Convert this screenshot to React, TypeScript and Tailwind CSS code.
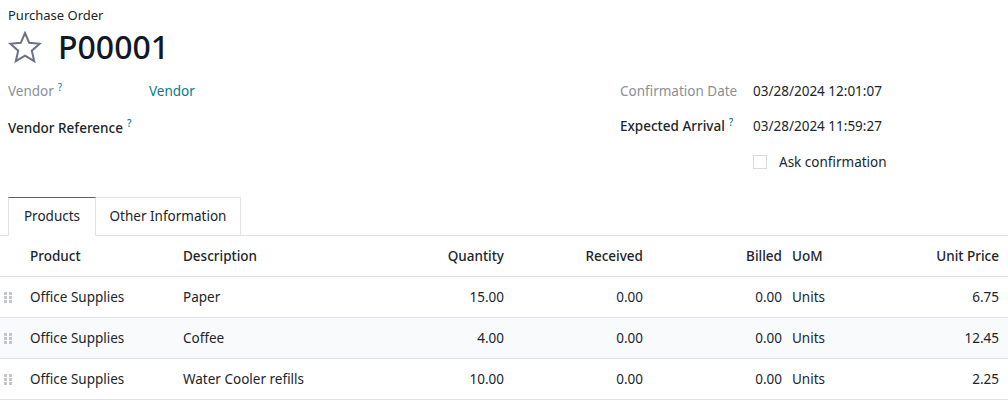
import React from 'react';

const lines = [
  { product: 'Office Supplies', description: 'Paper', qty: '15.00', received: '0.00', billed: '0.00', uom: 'Units', price: '6.75' },
  { product: 'Office Supplies', description: 'Coffee', qty: '4.00', received: '0.00', billed: '0.00', uom: 'Units', price: '12.45' },
  { product: 'Office Supplies', description: 'Water Cooler refills', qty: '10.00', received: '0.00', billed: '0.00', uom: 'Units', price: '2.25' },
];

const cols = 'grid grid-cols-[30px_153px_221px_100px_139px_139px_98px_119px] pr-[9px]';

function Help() {
  return <sup className="ml-1 text-[10px] text-[#017e84]">?</sup>;
}

function Handle() {
  return (
    <svg width="8" height="11" viewBox="0 0 8 11" className="ml-1">
      {[0, 4, 8].map((y) =>
        [0, 5].map((x) => <rect key={`${x}-${y}`} x={x} y={y} width="3" height="3" fill="#c2c7cc" />)
      )}
    </svg>
  );
}

export default function App() {
  return (
    <div className="w-[1008px] h-[406px] overflow-hidden bg-white text-[13.5px] text-[#212529] font-['Noto_Sans',sans-serif]">
      {/* En-tête */}
      <div className="px-2 pt-[5px]">
        <div className="text-[13px] leading-5">Purchase Order</div>
        <div className="flex items-center gap-4 h-[34px] mt-[5px]">
          <svg width="34" height="33" viewBox="0 0 34 33">
            <polygon
              points="17,2 21.2,11.8 31.8,12.7 23.8,19.7 26.2,30.2 17,24.6 7.8,30.2 10.2,19.7 2.2,12.7 12.8,11.8"
              fill="none"
              stroke="#6b7280"
              strokeWidth="2"
            />
          </svg>
          <h1 className="text-[32px] leading-none font-medium text-[#111827]">P00001</h1>
        </div>
      </div>

      {/* Champs */}
      <div className="flex px-2 mt-[15px] h-[118px]">
        <div className="w-[612px]">
          <div className="flex items-center h-6">
            <div className="w-[141px] text-[#8a8f94]">
              Vendor<Help />
            </div>
            <div className="text-[#017e84]">Vendor</div>
          </div>
          <div className="flex items-center h-6 mt-[13px] font-medium">
            Vendor Reference<Help />
          </div>
        </div>
        <div>
          <div className="flex items-center h-6">
            <div className="w-[133px] text-[#8a8f94]">Confirmation Date</div>
            <div>03/28/2024 12:01:07</div>
          </div>
          <div className="flex items-center h-6 mt-[11px]">
            <div className="w-[133px] font-medium">
              Expected Arrival<Help />
            </div>
            <div>03/28/2024 11:59:27</div>
          </div>
          <div className="flex items-center h-6 mt-[12px] pl-[133px]">
            <span className="w-[14px] h-[14px] border border-[#d5d8dc] bg-white" />
            <span className="ml-3">Ask confirmation</span>
          </div>
        </div>
      </div>

      {/* Onglets */}
      <div className="flex px-2 border-b border-[#dee2e6]">
        <div className="h-[39px] w-[88px] -mb-px flex items-center justify-center bg-white border border-b-white border-[#dee2e6] border-t-[#71526f]">
          Products
        </div>
        <div className="h-[38px] w-[145px] flex items-center justify-center border border-l-0 border-b-0 border-[#dee2e6]">
          Other Information
        </div>
      </div>

      {/* Lignes */}
      <div className={`${cols} h-[41px] items-center font-medium border-b border-[#dee2e6]`}>
        <div />
        <div>Product</div>
        <div>Description</div>
        <div className="text-right">Quantity</div>
        <div className="text-right">Received</div>
        <div className="text-right">Billed</div>
        <div className="pl-[10px]">UoM</div>
        <div className="text-right">Unit Price</div>
      </div>
      {lines.map((l, i) => (
        <div
          key={i}
          className={`${cols} h-[41px] items-center border-b border-[#dee2e6] ${i === 1 ? 'bg-[#f9fafb]' : ''}`}
        >
          <div className="flex items-center">
            <Handle />
          </div>
          <div>{l.product}</div>
          <div>{l.description}</div>
          <div className="text-right">{l.qty}</div>
          <div className="text-right">{l.received}</div>
          <div className="text-right">{l.billed}</div>
          <div className="pl-[10px]">{l.uom}</div>
          <div className="text-right">{l.price}</div>
        </div>
      ))}
    </div>
  );
}
